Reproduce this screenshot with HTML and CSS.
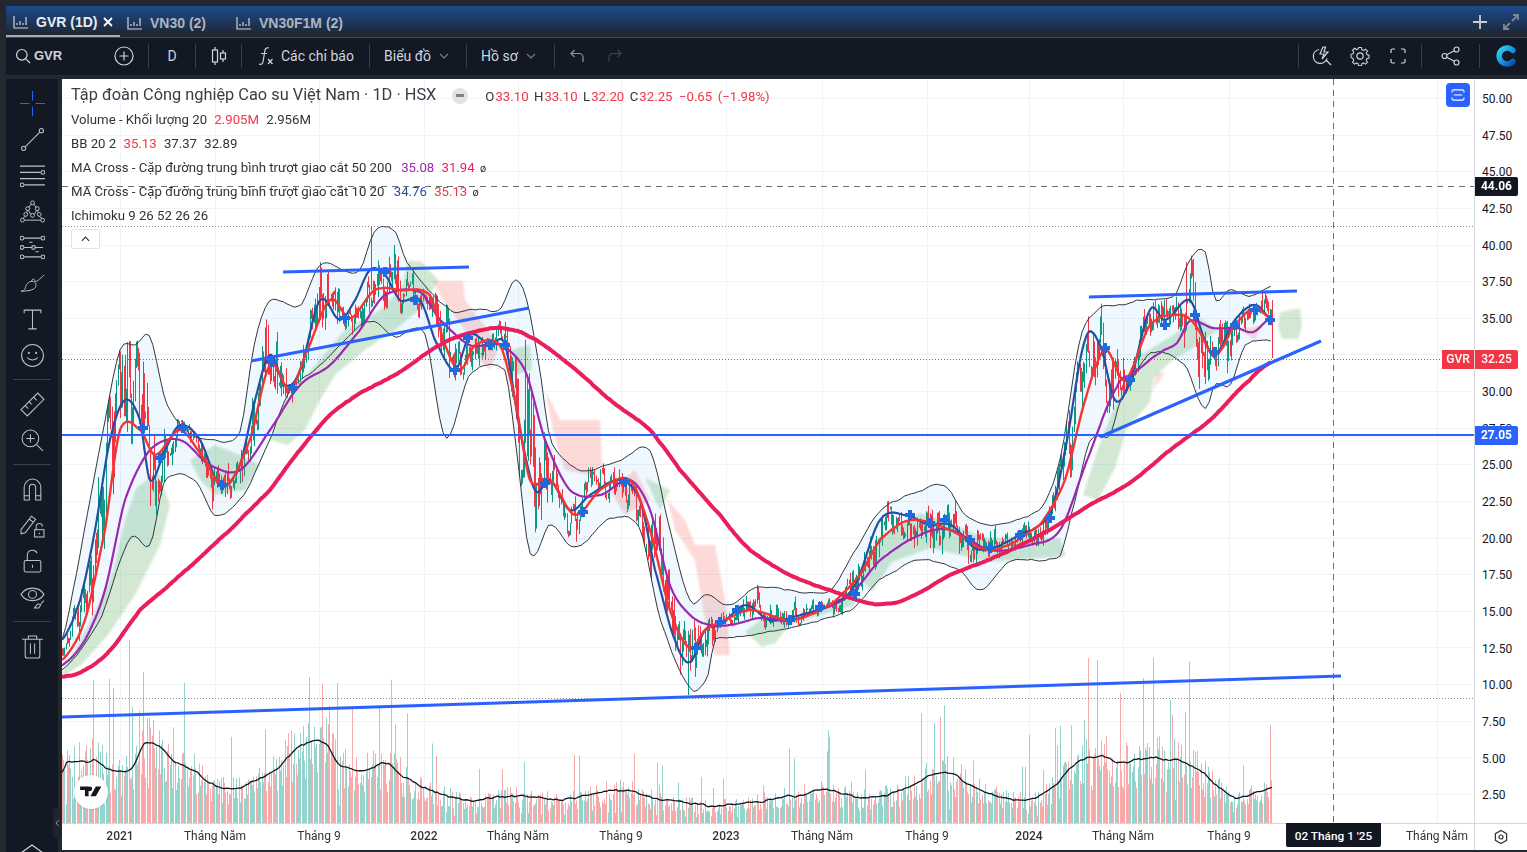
FILE: index.html
```html
<!DOCTYPE html>
<html lang="vi">
<head>
<meta charset="utf-8">
<title>GVR (1D)</title>
<link rel="stylesheet" href="styles.css">
</head>
<body>
<header class="tabs">
  <div class="tab tab-active">
    <svg class="ic tab-ic" viewBox="0 0 16 14"><path d="M1 1v12h14M4 10V8M7 10V6M10 10V8M13 10V2"/></svg>
    <span class="tab-label tab-label-active">GVR (1D)</span>
    <svg class="tab-x" viewBox="0 0 12 12"><path d="M2 2l8 8M10 2l-8 8"/></svg>
  </div>
  <div class="tab tab-vn30">
    <svg class="ic tab-ic" viewBox="0 0 16 14"><path d="M1 1v12h14M4 10V8M7 10V6M10 10V8M13 10V2"/></svg>
    <span class="tab-label">VN30 (2)</span>
  </div>
  <div class="tab tab-f1m">
    <svg class="ic tab-ic" viewBox="0 0 16 14"><path d="M1 1v12h14M4 10V8M7 10V6M10 10V8M13 10V2"/></svg>
    <span class="tab-label">VN30F1M (2)</span>
  </div>
  <div class="tab-tools">
    <svg class="tab-plus" viewBox="0 0 16 16"><path d="M8 1v14M1 8h14"/></svg>
    <svg class="tab-expand" viewBox="0 0 18 18"><path d="M10 8l6-6M11 2h5v5M8 10l-6 6M2 11v5h5"/></svg>
  </div>
</header>

<nav class="toolbar">
  <div class="tb tb-search">
    <svg class="ic ic-16" viewBox="0 0 16 16"><circle cx="6.8" cy="6.8" r="5.3"/><path d="M10.8 10.8l4.2 4.2"/></svg>
    <span class="symbol">GVR</span>
    <svg class="ic ic-20 tb-add" viewBox="0 0 20 20"><circle cx="10" cy="10" r="9"/><path d="M10 5.5v9M5.5 10h9"/></svg>
  </div>
  <i class="sep"></i>
  <div class="tb tb-d">D</div>
  <i class="sep"></i>
  <div class="tb tb-candle">
    <svg class="ic ic-16w" viewBox="0 0 16 20"><path d="M4 1v3M4 16v3M12 4v3M12 13v3"/><rect x="1.5" y="4" width="5" height="12"/><rect x="9.5" y="7" width="5" height="6"/></svg>
  </div>
  <i class="sep"></i>
  <div class="tb tb-ind">
    <svg class="ic ic-fx" viewBox="0 0 16 20"><path d="M11 2C8 1 7 3 6.6 6L5.2 15C4.8 18 3.4 19 1 18M3 7.5h6M10 13l4.5 5M14.5 13L10 18"/></svg>
    <span>Các chỉ báo</span>
  </div>
  <i class="sep"></i>
  <div class="tb tb-chart"><span>Biểu đồ</span>
    <svg class="chev" viewBox="0 0 10 6"><path d="M1 1l4 4 4-4"/></svg></div>
  <i class="sep"></i>
  <div class="tb tb-prof"><span>Hồ sơ</span>
    <svg class="chev" viewBox="0 0 10 6"><path d="M1 1l4 4 4-4"/></svg></div>
  <i class="sep"></i>
  <div class="tb tb-undo">
    <svg class="ic ic-16 soft" viewBox="0 0 16 16"><path d="M5.5 2L2 5.5 5.5 9M2 5.5h8a4 4 0 0 1 4 4V14"/></svg>
    <svg class="ic ic-16 dim" viewBox="0 0 16 16"><path d="M10.5 2L14 5.5 10.5 9M14 5.5H6a4 4 0 0 0-4 4V14"/></svg>
  </div>
  <div class="tb-spacer"></div>
  <i class="sep"></i>
  <div class="tb tb-right">
    <svg class="ic ic-20" viewBox="0 0 20 20"><path d="M7 3.5A7 7 0 1 0 15 12.5M14 14l5 5M11 1L8 8h4l-2 5 6-7h-4l1.500-5z"/></svg>
    <svg class="ic ic-20" viewBox="0 0 20 20"><path d="M8.400 1h3.200l.5 2.500 1.800.8 2.200-1.400 2.200 2.200-1.400 2.200.8 1.800 2.300.5v3.200l-2.300.5-.8 1.800 1.400 2.200-2.200 2.200-2.200-1.400-1.800.8-.5 2.300H8.400l-.5-2.300-1.800-.8-2.200 1.400-2.200-2.200 1.400-2.200-.8-1.800L0 11.800V8.600l2.300-.5.800-1.800L1.700 4.100l2.200-2.200 2.200 1.400 1.800-.8z" transform="translate(1 .6) scale(.9)"/><circle cx="10" cy="10" r="3.200"/></svg>
    <svg class="ic ic-20" viewBox="0 0 20 20"><path d="M7 3H4.500A1.500 1.500 0 0 0 3 4.500V7M13 3h2.500A1.500 1.500 0 0 1 17 4.500V7M17 13v2.500a1.500 1.500 0 0 1-1.500 1.500H13M7 17H4.500A1.500 1.500 0 0 1 3 15.500V13"/></svg>
  </div>
  <i class="sep"></i>
  <div class="tb tb-share">
    <svg class="ic ic-20" viewBox="0 0 20 20"><circle cx="3.500" cy="10" r="2.500"/><circle cx="15.500" cy="3.500" r="2.500"/><circle cx="15.500" cy="16.500" r="2.500"/><path d="M5.700 8.800l7.600-4.100M5.700 11.200l7.600 4.100"/></svg>
  </div>
  <i class="sep"></i>
  <div class="tb tb-logo">
    <svg class="logo" viewBox="0 0 22 22">
      <defs><linearGradient id="lg" x1="0" y1="0" x2="1" y2="1"><stop offset="0" stop-color="#35d0f0"/><stop offset=".55" stop-color="#1a8fe0"/><stop offset="1" stop-color="#0a4fb0"/></linearGradient></defs>
      <path d="M18 5.500A8 8 0 1 0 18 16.500" fill="none" stroke="url(#lg)" stroke-width="5.500" stroke-linecap="round"/>
    </svg>
  </div>
</nav>

<main class="workspace">
  <aside class="side">
    <div class="sb"><svg class="sic blue" viewBox="0 0 24 24"><path d="M12 0v9M12 15v9M0 12h9M15 12h9"/></svg></div>
    <div class="sb"><svg class="sic" viewBox="0 0 24 24"><circle cx="3.500" cy="20.500" r="2"/><circle cx="20.500" cy="3.500" r="2"/><path d="M5 19L19 5"/></svg></div>
    <div class="sb"><svg class="sic" viewBox="0 0 24 24"><path d="M0 3h24M0 9h20M0 15h24M4 21h20"/><circle cx="22" cy="9" r="1.800"/><circle cx="2" cy="21" r="1.800"/></svg></div>
    <div class="sb"><svg class="sic" viewBox="0 0 26 24"><circle cx="2.500" cy="21" r="2"/><circle cx="23.500" cy="21" r="2"/><circle cx="13" cy="3" r="2"/><circle cx="8" cy="9" r="2"/><circle cx="18" cy="9" r="2"/><circle cx="6" cy="15" r="2"/><circle cx="20" cy="15" r="2"/><circle cx="13" cy="16" r="2"/><path d="M4.500 21h17M3 19l3-2M23 19l-3-2M8 10.500L7 13M18 10.500l1 2.500M9 8l3-4M17 8l-3-4M11 15L9 11M15 15l2-4"/></svg></div>
    <div class="sb"><svg class="sic" viewBox="0 0 24 24"><path d="M4 3h16M4 12h8M14 12h8M4 21h16M9 7l3 0M15 16h3"/><circle cx="2" cy="3" r="1.800"/><circle cx="22" cy="3" r="1.800"/><circle cx="2" cy="21" r="1.800"/><circle cx="22" cy="21" r="1.800"/><circle cx="2" cy="12" r="1.800"/><circle cx="13" cy="12" r="1.800"/></svg></div>
    <div class="sb"><svg class="sic" viewBox="0 0 26 24"><path d="M1 20c3 0 4-1 5-5 1-3 4-6 8-5 3 1 3 4 2 6-2 3-8 4-15 4zM12 10c1-4 3-3 4 0 2 0 4-2 9-7"/></svg></div>
    <div class="sb"><svg class="sic" viewBox="0 0 24 24"><path d="M4 6V3h16v3M12 3v18M8 21h8"/></svg></div>
    <div class="sb"><svg class="sic" viewBox="0 0 24 24"><circle cx="12" cy="12" r="10.500"/><path d="M7 14c2 3 8 3 10 0"/><circle cx="8.500" cy="9.500" r=".5"/><circle cx="15.500" cy="9.500" r=".5"/></svg></div>
    <div class="side-sep"></div>
    <div class="sb"><svg class="sic" viewBox="0 0 24 24"><path d="M1 17L17 1l6 6L7 23zM5 13l3 3M9 9l2 3M13 5l3 3"/></svg></div>
    <div class="sb"><svg class="sic" viewBox="0 0 24 24"><circle cx="10" cy="10" r="8"/><path d="M16 16l6 6M10 6v8M6 10h8"/></svg></div>
    <div class="side-sep"></div>
    <div class="sb"><svg class="sic" viewBox="0 0 24 24"><path d="M4 22V10a8 8 0 0 1 16 0v12h-5V10a3 3 0 0 0-6 0v12zM4 18h5M15 18h5"/></svg></div>
    <div class="sb"><svg class="sic" viewBox="0 0 24 24"><path d="M1 16L11 3l4 3L5 19l-4 1zM9 6l4 3"/><rect x="14" y="16" width="9" height="7"/><path d="M15.500 16v-3a3 3 0 0 1 6 0M18.500 19v1.500"/></svg></div>
    <div class="sb"><svg class="sic" viewBox="0 0 24 24"><rect x="4" y="11" width="16" height="11" rx="1.500"/><path d="M7 11V6a5 5 0 0 1 9.500-2M12 15v3"/></svg></div>
    <div class="sb"><svg class="sic" viewBox="0 0 24 24"><path d="M1 9c5-8 17-8 22 0-5 8-17 8-22 0z"/><circle cx="12" cy="9" r="3.800"/><path d="M14 22l3-4 3 1-2 3zM20 18l3-3"/></svg></div>
    <div class="side-sep"></div>
    <div class="sb"><svg class="sic" viewBox="0 0 24 24"><path d="M2 5h20M8 5V2h8v3M5 5v16a2 2 0 0 0 2 2h10a2 2 0 0 0 2-2V5M10 9v10M14 9v10"/></svg></div>
  </aside>

  <section class="chart">
    <div class="pane">
      <canvas id="plot" width="1412" height="744"></canvas>

      <div class="legend">
        <div class="l-title">
          <span class="l-name">Tập đoàn Công nghiệp Cao su Việt Nam · 1D · HSX</span>
          <i class="l-dot"></i>
          <span class="ohlc">O<b>33.10</b> H<b>33.10</b> L<b>32.20</b> C<b>32.25</b> <b>−0.65 (−1.98%)</b></span>
        </div>
        <div class="l-row">Volume - Khối lượng 20 <b>2.905M</b> <span>2.956M</span></div>
        <div class="l-row">BB 20 2 <b>35.13</b> <span>37.37</span> <span>32.89</span></div>
        <div class="l-row">MA Cross - Cặp đường trung bình trượt giao cắt 50 200 <b class="purple">35.08</b> <b class="pink">31.94</b> <em>ø</em></div>
        <div class="l-row">MA Cross - Cặp đường trung bình trượt giao cắt 10 20 <b class="navy">34.76</b> <b>35.13</b> <em>ø</em></div>
        <div class="l-row">Ichimoku 9 26 52 26 26</div>
        <button class="collapse"><svg viewBox="0 0 10 6"><path d="M1 5l4-4 4 4"/></svg></button>
      </div>

      <button class="reset"><svg viewBox="0 0 16 14"><path d="M1 4V3a2 2 0 0 1 2-2h10a2 2 0 0 1 2 2v1M1 10v1a2 2 0 0 0 2 2h10a2 2 0 0 0 2-2v-1M3 7h10"/></svg></button>

      <div class="tv-logo">
        <svg viewBox="0 0 36 28"><path d="M0 4h14v16H8V10H0zM26 4h9l-9 16h-9zM16 4a4 4 0 1 1 0 8 4 4 0 0 1 0-8z" fill="#131722"/></svg>
      </div>
      <div class="handle"><svg viewBox="0 0 6 10"><path d="M5 1L1 5l4 4"/></svg></div>
    </div>

    <div class="price-axis">
      <span>50.00</span><span>47.50</span><span>45.00</span><span>42.50</span><span>40.00</span>
      <span>37.50</span><span>35.00</span><span></span><span>30.00</span><span>27.50</span>
      <span>25.00</span><span>22.50</span><span>20.00</span><span>17.50</span><span>15.00</span>
      <span>12.50</span><span>10.00</span><span>7.50</span><span>5.00</span><span>2.50</span>
      <div class="tag tag-cross">44.06</div>
      <div class="tag tag-last">32.25</div>
      <div class="tag tag-sym">GVR</div>
      <div class="tag tag-line">27.05</div>
    </div>

    <div class="time-axis">
      <span class="yr" style="left:58px">2021</span>
      <span style="left:153px">Tháng Năm</span>
      <span style="left:257px">Tháng 9</span>
      <span class="yr" style="left:362px">2022</span>
      <span style="left:456px">Tháng Năm</span>
      <span style="left:559px">Tháng 9</span>
      <span class="yr" style="left:664px">2023</span>
      <span style="left:760px">Tháng Năm</span>
      <span style="left:865px">Tháng 9</span>
      <span class="yr" style="left:967px">2024</span>
      <span style="left:1061px">Tháng Năm</span>
      <span style="left:1167px">Tháng 9</span>
      <span style="left:1375px">Tháng Năm</span>
      <div class="date-tag">02 Tháng 1 '25</div>
    </div>

    <div class="axis-corner">
      <svg viewBox="0 0 16 16"><path d="M8 1.500l5.600 3.200v6.600L8 14.500l-5.600-3.200V4.700z"/><circle cx="8" cy="8" r="2"/></svg>
    </div>
  </section>
</main>
<svg class="home" viewBox="0 0 24 10"><path d="M1 9l11-8 11 8"/></svg>
<script src="chart.js"></script>
</body>
</html>
```
FILE: styles.css
```css
* { box-sizing: border-box; }
html, body { height: 100%; }
body {
  margin: 0;
  width: 1527px;
  height: 852px;
  overflow: hidden;
  padding: 6px 0 2px 6px;
  background: #23282f;
  display: flex;
  flex-direction: column;
  font-family: Roboto, "Liberation Sans", sans-serif;
  color: #d1d4dc;
  position: relative;
}
svg { display: block; }

/* tabs */
.tabs {
  height: 32px;
  flex: none;
  display: flex;
  align-items: center;
  background: linear-gradient(#1c4a8e, #1f2a3a 85%, #21262e);
  border-bottom: 1px solid #434852;
}
.tab {
  height: 31px;
  display: flex;
  align-items: center;
  flex: none;
  white-space: nowrap;
  font: 700 14px "Liberation Sans", sans-serif;
  color: #aeb4c0;
  padding-top: 2px;
}
.tab-active { width: 114px; padding-left: 7px; border-bottom: 2px solid #a6acb8; }
.tab-vn30 { width: 100px; padding-left: 7px; }
.tab-f1m { padding-left: 16px; }
.tab-ic { width: 16px; height: 14px; margin-right: 7px; }
.tab-label-active { color: #e8ebf0; }
.tab-x { width: 12px; height: 12px; margin-left: 5px; fill: none; stroke: #fff; stroke-width: 1.800; }
.tab-tools { margin-left: auto; display: flex; align-items: center; gap: 14px; padding-right: 7px; }
.tab-plus { width: 16px; height: 16px; fill: none; stroke: #c8ccd4; stroke-width: 1.800; }
.tab-expand { width: 18px; height: 18px; fill: none; stroke: #7f8896; stroke-width: 1.800; }

/* toolbar */
.toolbar {
  height: 37px;
  flex: none;
  display: flex;
  align-items: center;
  background: #131825;
  font-size: 14px;
  color: #d1d4dc;
  padding-bottom: 2px;
}
.sep { width: 1px; height: 24px; background: #3a3f4b; flex: none; }
.tb { display: flex; align-items: center; height: 100%; flex: none; }
.tb-spacer { flex: 1; }
.ic { fill: none; stroke: #d1d4dc; stroke-width: 1.200; flex: none; }
.ic-16 { width: 16px; height: 16px; }
.ic-20 { width: 20px; height: 20px; }
.ic-16w { width: 16px; height: 20px; }
.ic-fx { width: 16px; height: 20px; }
.soft { stroke: #8f939c; }
.dim { stroke: #3f4450; }
.tb-search { width: 142px; padding-left: 9px; }
.symbol { font: 700 13px "Liberation Sans", sans-serif; margin-left: 3px; }
.tb-add { margin-left: 52px; }
.tb-d { width: 46px; justify-content: center; }
.tb-candle { width: 45px; justify-content: center; }
.tb-ind { width: 127px; padding-left: 16px; gap: 7px; }
.tb-chart { width: 96px; padding-left: 14px; }
.tb-prof { width: 87px; padding-left: 14px; }
.chev { width: 10px; height: 6px; margin-left: 8px; fill: none; stroke: #787b86; stroke-width: 1.200; }
.tb-undo { width: 90px; padding-left: 14px; gap: 22px; }
.tb-right { width: 122px; padding-left: 13px; gap: 18px; }
.tb-share { width: 57px; justify-content: center; }
.tb-logo { width: 47px; padding-left: 15px; }
.logo { width: 22px; height: 22px; }

/* workspace */
.workspace {
  flex: 1;
  min-height: 0;
  display: flex;
  margin-top: 4px;
  gap: 4px;
}
.side {
  width: 52px;
  flex: none;
  background: #131825;
  padding-top: 6px;
  display: flex;
  flex-direction: column;
  margin-bottom: -2px;
}
.sb { height: 36px; display: flex; align-items: center; justify-content: center; flex: none; }
.sic { width: 25px; height: 25px; fill: none; stroke: #bcc0c8; stroke-width: 1; }
.blue { stroke: #2962ff; }
.side-sep { height: 1px; margin: 6px 7px; background: #3a3f4b; flex: none; }

/* chart */
.chart {
  flex: 1;
  min-width: 0;
  background: #fff;
  display: grid;
  grid-template-columns: 1412px 53px;
  grid-template-rows: 744px 27px;
  color: #131722;
}
.pane { position: relative; }
#plot { display: block; }

.legend {
  position: absolute;
  left: 9px;
  top: 3px;
  display: flex;
  flex-direction: column;
  align-items: flex-start;
  font-size: 13.200px;
  color: #333;
}
.l-title { height: 26px; display: flex; align-items: center; white-space: nowrap; padding-bottom: 1px; }
.l-name { font-size: 16.350px; color: #3a3d45; }
.l-dot { width: 16px; height: 16px; margin: 2px 0 0 16px; border-radius: 50%; background: #e2e3e7; position: relative; flex: none; }
.l-dot::after { content: ""; position: absolute; left: 4px; right: 4px; top: 6.500px; height: 3px; background: #80838c; }
.ohlc { font-size: 13.200px; margin: 3px 0 0 17px; color: #333; word-spacing: 2.200px; }
.ohlc b, .l-row b { font-weight: 400; color: #f23645; }
.ohlc b { margin-left: 1px; }
.l-row { height: 24px; line-height: 24px; white-space: nowrap; }
.l-row b, .l-row span { margin-left: 4px; }
.l-row em { font-style: normal; font-size: 11px; margin-left: 2px; }
.l-row .purple { color: #9c27b0; margin-left: 6px; }
.l-row .pink { color: #e91e63; }
.l-row .navy { color: #2450a4; margin-left: 6px; }
.collapse {
  width: 29px;
  height: 20px;
  margin-top: 1px;
  padding: 0;
  background: #fff;
  border: 1px solid #e0e3eb;
  border-radius: 2px;
  display: flex;
  align-items: center;
  justify-content: center;
}
.collapse svg { width: 9px; height: 6px; fill: none; stroke: #333; stroke-width: 1.300; }

.reset {
  position: absolute;
  right: 4px;
  top: 4px;
  width: 24px;
  height: 24px;
  padding: 0;
  border: 0;
  border-radius: 4px;
  background: #2962ff;
  display: flex;
  align-items: center;
  justify-content: center;
}
.reset svg { width: 14px; height: 12px; fill: none; stroke: #fff; stroke-width: 1.300; }

.tv-logo {
  position: absolute;
  left: 12px;
  bottom: 14px;
  width: 34px;
  height: 34px;
  border-radius: 50%;
  background: #fff;
  box-shadow: 0 0 3px rgba(0,0,0,.15);
  display: flex;
  align-items: center;
  justify-content: center;
}
.tv-logo svg { width: 22px; height: 17px; }
.handle {
  position: absolute;
  left: -9px;
  bottom: -15px;
  width: 8px;
  height: 30px;
  border-radius: 3px 0 0 3px;
  background: #1e2330;
  display: flex;
  align-items: center;
  justify-content: center;
}
.handle svg { width: 5px; height: 8px; fill: none; stroke: #b2b5be; stroke-width: 1; }

.price-axis {
  position: relative;
  border-left: 1px solid #d6d8dd;
  padding-top: 2px;
  display: flex;
  flex-direction: column;
  font-size: 12px;
  width: 53px;
}
.price-axis > span { height: 36.650px; line-height: 36.650px; padding-left: 7px; flex: none; }
.tag {
  position: absolute;
  height: 19px;
  line-height: 19px;
  font-size: 12px;
  font-weight: 700;
  color: #fff;
  text-align: center;
}
.tag-cross { left: 0; width: 43px; top: 98px; background: #131722; border-radius: 0 2px 2px 0; }
.tag-last { left: 0; width: 43px; top: 271px; background: #f23645; border-radius: 0 2px 2px 0; font-weight: 500; }
.tag-sym { left: -33px; width: 32px; top: 271px; background: #f23645; font-weight: 500; }
.tag-line { left: 0; width: 43px; top: 347px; background: #2962ff; border-radius: 0 2px 2px 0; }

.time-axis {
  position: relative;
  border-top: 1px solid #d6d8dd;
  font-size: 12px;
  color: #333;
}
.time-axis span {
  position: absolute;
  top: 4px;
  transform: translateX(-50%);
  white-space: nowrap;
  line-height: 16px;
}
.time-axis .yr { font-weight: 500; }
.date-tag {
  position: absolute;
  left: 1224px;
  top: -1px;
  width: 95px;
  height: 24px;
  line-height: 26px;
  background: #131722;
  color: #fff;
  text-align: center;
  font-weight: 500;
  font-size: 11.800px;
  border-radius: 0 0 2px 2px;
}
.axis-corner {
  border-top: 1px solid #d6d8dd;
  border-left: 1px solid #d6d8dd;
  display: flex;
  align-items: center;
  justify-content: center;
}
.axis-corner svg { width: 16px; height: 16px; fill: none; stroke: #333; stroke-width: 1.200; }
.home {
  position: absolute;
  left: 20px;
  bottom: -2px;
  width: 24px;
  height: 10px;
  fill: none;
  stroke: #d1d4dc;
  stroke-width: 1.200;
}
```
FILE: chart.js
```js
(function () {
  var cv = document.getElementById('plot');
  var g = cv.getContext('2d');
  g.translate(-62, -79);

  var seed = 20210;
  function rnd() {
    seed |= 0; seed = seed + 0x6D2B79F5 | 0;
    var t = Math.imul(seed ^ seed >>> 15, 1 | seed);
    t = t + Math.imul(t ^ t >>> 7, 61 | t) ^ t;
    return ((t ^ t >>> 14) >>> 0) / 4294967296;
  }
  function gauss() { return (rnd() + rnd() + rnd() + rnd() - 2) * 1.7; }

  function fn(p) {
    return function (x) {
      if (x <= p[0][0]) return p[0][1];
      var n = p.length;
      if (x >= p[n - 1][0]) return p[n - 1][1];
      var i = 0;
      while (p[i + 1][0] < x) i++;
      var a = p[Math.max(i - 1, 0)][1], b = p[i][1], c = p[i + 1][1], d = p[Math.min(i + 2, n - 1)][1];
      var t = (x - p[i][0]) / (p[i + 1][0] - p[i][0]);
      return 0.5 * (2 * b + (c - a) * t + (2 * a - 5 * b + 4 * c - d) * t * t + (3 * b - a - 3 * c + d) * t * t * t);
    };
  }

  var BLUE = fn([[62,640],[80,600],[95,530],[110,440],[125,400],[140,420],[150,480],[165,450],[180,425],[200,440],[220,485],[240,465],[255,400],[270,355],[285,385],[300,370],[320,300],[340,320],[355,300],[370,270],[385,275],[400,300],[420,300],[435,340],[455,370],[470,335],[490,345],[505,345],[520,430],[535,490],[550,480],[570,510],[590,495],[620,480],[640,500],[655,570],[675,640],[690,662],[705,630],[720,625],[745,605],[770,620],[800,615],[830,605],[855,585],[880,520],[905,515],[930,525],[950,525],[980,550],[1020,535],[1050,515],[1065,450],[1085,340],[1100,345],[1115,400],[1130,380],[1150,310],[1165,320],[1190,300],[1205,340],[1215,355],[1235,320],[1255,305],[1272,320]]);
  var RED = fn([[62,660],[85,620],[105,530],[120,430],[140,430],[155,455],[180,430],[205,460],[225,487],[250,440],[270,365],[290,390],[305,355],[330,300],[350,318],[375,290],[400,290],[430,295],[445,345],[460,370],[475,345],[500,345],[515,400],[530,480],[550,480],[575,515],[600,490],[630,480],[650,530],[670,610],[690,648],[705,630],[720,622],[750,610],[790,620],[830,605],[860,575],[880,540],[910,520],[950,530],[990,550],[1040,525],[1065,480],[1085,400],[1105,350],[1125,380],[1150,325],[1180,315],[1195,325],[1215,355],[1235,325],[1255,308],[1272,320]]);
  var PURPLE = fn([[62,665],[85,640],[105,590],[125,500],[150,450],[180,440],[210,465],[240,470],[270,430],[300,385],[330,365],[360,330],[385,295],[420,292],[440,320],[470,345],[500,345],[525,370],[545,440],[570,490],[600,495],[630,480],[650,510],[670,585],[690,615],[710,625],[730,625],[760,618],[790,620],[820,610],[850,595],[880,560],[920,535],[950,530],[990,550],[1030,545],[1060,530],[1087,460],[1117,387],[1133,373],[1160,353],[1177,343],[1190,321],[1213,328],[1237,328],[1253,332],[1272,317]]);
  var PINK = fn([[62,677],[85,670],[110,650],[140,610],[180,575],[230,530],[270,490],[300,450],[330,415],[360,393],[400,372],[440,345],[470,333],[500,328],[530,337],[570,365],[610,400],[650,430],[680,470],[720,515],[750,550],[790,575],[830,590],[860,601],[885,604],[910,597],[950,575],[1000,555],[1050,530],[1090,505],[1130,483],[1170,450],[1210,420],[1250,380],[1275,360]]);
  var UP = fn([[62,640],[75,580],[90,500],[105,420],[120,350],[135,345],[150,338],[165,400],[185,430],[210,440],[240,430],[255,340],[270,300],[300,305],[320,265],[345,270],[360,270],[375,230],[395,230],[405,260],[430,290],[450,310],[475,310],[500,310],[515,280],[527,300],[540,370],[550,440],[580,470],[620,460],[650,450],[670,530],[690,600],[705,595],[730,605],[755,588],[790,590],[830,590],[855,550],[880,510],[910,495],[945,485],[965,515],[990,525],[1040,510],[1060,460],[1080,340],[1100,308],[1115,305],[1140,300],[1175,295],[1190,260],[1205,252],[1215,300],[1230,290],[1250,295],[1272,285]]);
  var LOW = fn([[62,670],[100,620],[130,540],[150,545],[165,480],[195,480],[215,515],[245,495],[270,440],[290,390],[315,370],[340,345],[370,320],[395,335],[425,335],[445,437],[470,375],[505,370],[515,440],[530,555],[550,525],[575,548],[610,520],[640,530],[660,620],[690,688],[707,680],[715,640],[750,635],[800,625],[850,610],[880,580],[920,560],[960,570],[980,590],[1010,560],[1060,555],[1075,500],[1090,440],[1110,435],[1120,400],[1150,355],[1185,365],[1205,410],[1215,385],[1230,385],[1245,345],[1272,340]]);
  var VMA = fn([[62,773],[68,763],[88,762],[95,760],[107,768],[130,770],[145,743],[160,748],[175,763],[195,770],[210,785],[240,788],[275,770],[300,745],[325,743],[340,765],[370,770],[385,762],[400,775],[430,790],[470,800],[520,795],[560,800],[620,790],[660,800],[720,805],[800,795],[830,790],[860,797],[900,790],[945,772],[980,790],[1025,800],[1050,790],[1075,765],[1100,755],[1120,762],[1150,758],[1190,765],[1225,790],[1240,797],[1272,787]]);

  var STEP = 1.21, X0 = 62, X1 = 1272;
  function py(p) { return 98 + (50 - p) * 14.65; }

  function line(x1, y1, x2, y2, c, w, dash) {
    g.beginPath();
    g.moveTo(x1, y1); g.lineTo(x2, y2);
    g.strokeStyle = c; g.lineWidth = w; g.setLineDash(dash || []);
    g.stroke(); g.setLineDash([]);
  }
  function curve(f, c, w, jitter, step) {
    g.beginPath();
    var j = 0, s = step || STEP;
    for (var x = X0; x <= X1; x += s) {
      j = 0.72 * j + (jitter || 0) * gauss();
      var y = f(x) + j;
      if (x === X0) g.moveTo(x, y); else g.lineTo(x, y);
    }
    g.strokeStyle = c; g.lineWidth = w; g.lineJoin = 'round'; g.stroke();
  }
  function poly(p, c) {
    g.beginPath();
    p.forEach(function (q, i) { if (i) g.lineTo(q[0], q[1]); else g.moveTo(q[0], q[1]); });
    g.closePath(); g.fillStyle = c; g.fill();
  }

  /* grid */
  var gx = [120, 215, 319, 424, 518, 621, 726, 822, 927, 1029, 1123, 1229, 1333, 1437];
  gx.forEach(function (x) { line(x + .5, 79, x + .5, 823, '#f0f3fa', 1); });
  for (var p = 50; p > 0; p -= 2.5) {
    var y = Math.round(py(p)) + .5;
    line(62, y, 1474, y, '#f0f3fa', 1);
  }

  /* bars */
  var bars = [];
  var ar = 0, prev = 0;
  for (var x = X0; x <= X1; x += STEP) {
    var m = (BLUE(x) + RED(x)) / 2, b = (LOW(x) - UP(x)) / 2;
    ar = 0.72 * ar + 0.62 * gauss();
    var c = m + ar * b * 0.36;
    var hi = Math.min(c, prev || c) - rnd() * rnd() * b * 0.5;
    var lo = Math.max(c, prev || c) + rnd() * rnd() * b * 0.5;
    hi = Math.max(hi, UP(x) - 3);
    lo = Math.min(lo, LOW(x) + 2);
    bars.push({ x: Math.round(x) + .5, hi: hi, lo: lo, up: c < (prev || c) });
    prev = c;
  }

  /* volume */
  bars.forEach(function (d) {
    var base = 823 - VMA(d.x);
    var h = base * (0.55 + rnd() * 0.8);
    if (rnd() < 0.06) h = base * (1.5 + rnd() * 1.3);
    if (rnd() < 0.08) h *= 0.5;
    if (h > 165) h = 165;
    line(d.x, 823, d.x, 823 - h, d.up ? '#93d3cc' : '#f8abaa', 1);
  });
  line(1270.5, 823, 1270.5, 725, '#f8abaa', 1);
  [[129, 640], [143, 672], [309, 677], [1088, 658], [1143, 678], [1170, 700], [1029, 735], [828, 730]].forEach(function (v, i) {
    line(v[0] + .5, 823, v[0] + .5, v[1], i === 3 ? '#f8abaa' : '#93d3cc', 1);
  });
  curve(VMA, '#131722', 1.3, 0.6, 2.42);

  /* ichimoku cloud */
  var GR = 'rgba(67,160,71,.24)', RD = 'rgba(244,67,54,.2)';
  g.filter = 'blur(1.2px)';
  [
    [[62,672],[75,650],[95,612],[112,575],[125,520],[136,488],[158,472],[170,505],[160,545],[135,595],[108,635],[82,664],[62,677]],
    [[190,460],[215,445],[240,455],[260,465],[245,490],[215,495],[200,480]],
    [[270,440],[285,400],[315,365],[345,330],[380,310],[402,288],[408,260],[422,262],[438,280],[425,305],[395,330],[365,350],[335,375],[320,400],[305,430],[288,445]],
    [[510,350],[530,345],[532,370],[515,375]],
    [[645,478],[670,490],[660,510]],
    [[745,632],[762,647],[775,643],[790,625],[830,612],[855,605],[850,595],[800,620],[760,620]],
    [[860,578],[878,538],[920,513],[950,523],[985,538],[1060,538],[1066,556],[990,562],[930,548],[892,562],[872,592]],
    [[1083,495],[1098,448],[1116,403],[1136,358],[1168,338],[1200,318],[1218,330],[1193,348],[1170,362],[1154,378],[1150,402],[1127,428],[1115,468],[1098,500]],
    [[1280,312],[1300,308],[1302,327],[1298,339],[1282,339],[1278,327]]
  ].forEach(function (q) { poly(q, GR); });
  [
    [[433,281],[463,281],[465,300],[480,320],[500,345],[490,370],[480,360],[465,330],[450,310],[440,295]],
    [[545,390],[560,420],[600,420],[602,465],[590,475],[565,470],[555,440]],
    [[610,490],[635,470],[650,500],[625,515]],
    [[668,500],[685,520],[695,545],[715,545],[725,600],[730,655],[715,655],[705,620],[695,560],[675,530]],
    [[1153,390],[1157,373],[1165,372],[1160,380]],
    [[1240,330],[1262,325],[1255,340]]
  ].forEach(function (q) { poly(q, RD); });
  g.filter = 'none';

  /* bollinger fill */
  g.beginPath();
  for (var a = X0; a <= X1; a += STEP) g.lineTo(a, UP(a));
  for (var e = X1; e >= X0; e -= STEP) g.lineTo(e, LOW(e));
  g.closePath();
  g.fillStyle = 'rgba(33,150,243,.07)';
  g.fill();

  /* candles */
  bars.forEach(function (d) {
    line(d.x, d.hi, d.x, d.lo, d.up ? '#089981' : '#f23645', 1);
  });
  line(371.5, 226, 371.5, 290, '#f23645', 1);
  line(320.5, 265, 320.5, 320, '#f23645', 1);
  line(1186.5, 262, 1186.5, 320, '#f23645', 1);
  line(1272.5, 300, 1272.5, 358, '#f23645', 1);
  line(688.5, 695, 688.5, 650, '#089981', 1);

  /* bands */
  curve(UP, '#33363c', 1, 0.55, 3.63);
  curve(LOW, '#33363c', 1, 0.55, 3.63);

  /* moving averages */
  curve(BLUE, '#2450a4', 2.2, 0.14);
  curve(PURPLE, '#9c27b0', 2.2, 0.07);
  curve(RED, '#f5352f', 2.4, 0.12);
  curve(PINK, '#e91e5a', 4, 0.14);

  /* cross markers */
  [[143,428],[160,458],[183,428],[222,485],[293,388],[272,362],[345,318],[385,272],[415,300],[455,370],[468,338],[490,345],[505,345],[545,483],[583,512],[625,482],[696,648],[720,622],[737,610],[790,620],[820,607],[855,594],[910,515],[930,523],[945,520],[970,540],[990,548],[1020,535],[1050,518],[1105,348],[1130,380],[1165,325],[1195,315],[1215,352],[1235,325],[1255,310],[1270,320]].forEach(function (q) {
    g.fillStyle = '#1e6be0';
    g.fillRect(q[0] - 5, q[1] - 2, 10, 4);
    g.fillRect(q[0] - 2, q[1] - 5, 4, 10);
  });

  /* price lines */
  line(62, 226.5, 1474, 226.5, '#8a8d94', 1, [1, 2]);
  line(62, 698.5, 1474, 698.5, '#8a8d94', 1, [1, 2]);
  line(62, 359.5, 1474, 359.5, '#f23645', 1, [1, 2]);

  /* trend lines */
  var T = '#2962ff';
  line(62, 435, 1474, 435, T, 2);
  line(283, 272, 469, 267, T, 3);
  line(251, 361, 529, 308, T, 3);
  line(1089, 297, 1297, 291, T, 3);
  line(1100, 437, 1321, 341, T, 3);
  line(62, 717, 1341, 676, T, 3);

  /* crosshair */
  line(1333.5, 79, 1333.5, 823, '#6a6e76', 1, [6, 5]);
  line(62, 186.5, 1474, 186.5, '#6a6e76', 1, [6, 5]);
})();
```
